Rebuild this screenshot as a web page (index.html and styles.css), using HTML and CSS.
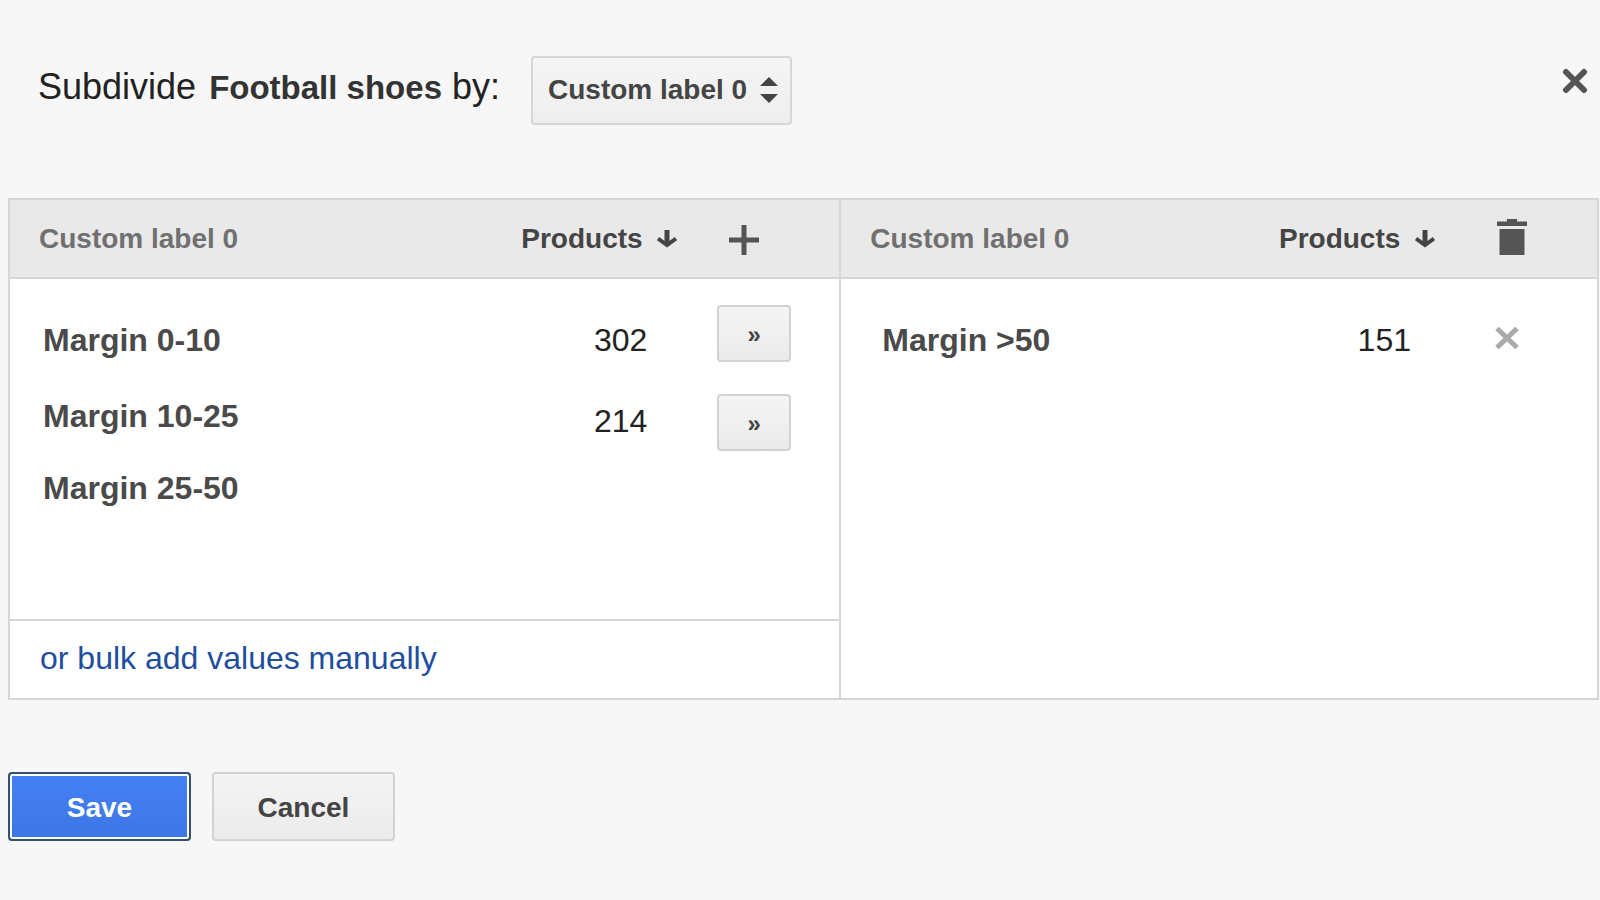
FILE: index.html
```html
<!DOCTYPE html>
<html lang="en">
<head>
    <meta charset="UTF-8">
    <meta name="viewport" content="width=device-width, initial-scale=1.0">
    <title>Subdivide product group</title>
    <link rel="stylesheet" href="styles.css">
</head>
<body>
    <form class="dialog">
        <header class="dialog-header">
            <label class="title" for="attribute">Subdivide <strong>Football shoes</strong> by:</label>
            <div class="select-wrap">
                <select id="attribute">
                    <option>Custom label 0</option>
                </select>
                <svg class="select-arrows" width="18" height="26" viewBox="0 0 18 26" fill="#444">
                    <path d="M9 0 18 9H0z"/>
                    <path d="M0 17h18l-9 9z"/>
                </svg>
            </div>
            <button type="button" class="close-button" aria-label="Close">
                <svg width="26" height="26" viewBox="0 0 26 26" stroke="#555" stroke-width="6" stroke-linecap="round">
                    <path d="M4 4 22 22M22 4 4 22"/>
                </svg>
            </button>
        </header>

        <div class="panels">
            <!-- Values that can be added -->
            <section class="panel available">
                <table>
                    <thead>
                        <tr>
                            <th class="name">Custom label 0</th>
                            <th class="count">
                                <button type="button" class="sort-button">Products
                                    <svg width="20" height="18" viewBox="0 0 20 18" stroke="#444" fill="none">
                                        <path d="M10 0v14" stroke-width="5"/>
                                        <path d="M1 8.500 10 15l9-6.500" stroke-width="4"/>
                                    </svg>
                                </button>
                            </th>
                            <th class="action">
                                <button type="button" class="icon-button" aria-label="Add all">
                                    <svg width="30" height="32" viewBox="0 -2 30 32" fill="#555">
                                        <path d="M12.500 0h5v12.500H30v5H17.500V30h-5V17.500H0v-5h12.500z"/>
                                    </svg>
                                </button>
                            </th>
                        </tr>
                    </thead>
                    <tbody>
                        <tr>
                            <td class="name">Margin 0-10</td>
                            <td class="count">302</td>
                            <td class="action"><button type="button" class="button add-button" aria-label="Add Margin 0-10">»</button></td>
                        </tr>
                        <tr>
                            <td class="name">Margin 10-25</td>
                            <td class="count">214</td>
                            <td class="action"><button type="button" class="button add-button" aria-label="Add Margin 10-25">»</button></td>
                        </tr>
                        <tr>
                            <td class="name">Margin 25-50</td>
                            <td class="count"></td>
                            <td class="action"></td>
                        </tr>
                    </tbody>
                </table>
                <div class="bulk-add">
                    <a href="#">or bulk add values manually</a>
                </div>
            </section>

            <!-- Values already chosen -->
            <section class="panel selected">
                <table>
                    <thead>
                        <tr>
                            <th class="name">Custom label 0</th>
                            <th class="count">
                                <button type="button" class="sort-button">Products
                                    <svg width="20" height="18" viewBox="0 0 20 18" stroke="#444" fill="none">
                                        <path d="M10 0v14" stroke-width="5"/>
                                        <path d="M1 8.500 10 15l9-6.500" stroke-width="4"/>
                                    </svg>
                                </button>
                            </th>
                            <th class="action">
                                <button type="button" class="icon-button" aria-label="Remove all">
                                    <svg width="30" height="40" viewBox="0 0 30 40" fill="#555">
                                        <path d="M0 2.500h10V0h10v2.500h10V7H0z"/>
                                        <path d="M2.500 10h25v26h-25z"/>
                                    </svg>
                                </button>
                            </th>
                        </tr>
                    </thead>
                    <tbody>
                        <tr>
                            <td class="name">Margin &gt;50</td>
                            <td class="count">151</td>
                            <td class="action">
                                <button type="button" class="icon-button" aria-label="Remove Margin &gt;50">
                                    <svg width="24" height="22" viewBox="0 0 24 22" stroke="#aaa" stroke-width="5">
                                        <path d="M2 1.500 22 20.500M22 1.500 2 20.500"/>
                                    </svg>
                                </button>
                            </td>
                        </tr>
                    </tbody>
                </table>
            </section>
        </div>

        <footer class="dialog-footer">
            <button type="button" class="button save-button">Save</button>
            <button type="button" class="button">Cancel</button>
        </footer>
    </form>
</body>
</html>
```
FILE: styles.css
```css
* {
    box-sizing: border-box;
}

body {
    margin: 0;
    background-color: #f7f7f7;
    color: #222;
    font-family: "Liberation Sans", Arial, sans-serif;
}

button,
select {
    font-family: inherit;
    cursor: pointer;
}

svg {
    display: block;
}

.dialog {
    padding: 56px 1px 56px 8px;
}

/* Header */
.dialog-header {
    display: flex;
    align-items: flex-start;
    margin-bottom: 73px;
    padding-left: 30px;
}

.title {
    margin-right: 31px;
    font-size: 36px;
    line-height: 62px;
}

.title strong {
    margin-left: 3px;
    color: #333;
    font-size: 33px;
}

.select-wrap {
    position: relative;
}

.select-wrap select {
    display: block;
    height: 69px;
    padding: 0 42px 2px 15px;
    appearance: none;
    border: 2px solid #d6d6d6;
    border-radius: 4px;
    background: linear-gradient(to bottom, #f5f5f5, #eeeeee);
    color: #444;
    font-size: 28px;
    font-weight: bold;
}

.select-arrows {
    position: absolute;
    top: 21px;
    right: 14px;
    pointer-events: none;
}

.close-button {
    height: 50px;
    margin-left: auto;
    padding: 0 11px;
    border: none;
    background: none;
}

/* Panels */
.panels {
    display: grid;
    grid-template-columns: 11fr 10fr;
    border: 2px solid #d6d6d6;
    background-color: white;
}

.panel {
    display: flex;
    flex-direction: column;
    min-height: 498px;
}

.available {
    border-right: 2px solid #d6d6d6;
}

table {
    width: 100%;
    border-collapse: separate;
    border-spacing: 0;
    table-layout: fixed;
}

th {
    height: 79px;
    padding: 0;
    border-bottom: 2px solid #d6d6d6;
    background-color: #e9e9e9;
    font-size: 28px;
    text-align: left;
}

th.name {
    padding-left: 29px;
    color: #707070;
}

th.count {
    width: 156px;
}

th.action {
    width: 162px;
    padding-left: 52px;
}

.selected th.action {
    padding-left: 62px;
}

.sort-button {
    display: flex;
    align-items: center;
    justify-content: space-between;
    width: 100%;
    padding: 0;
    border: none;
    background: none;
    color: #444;
    font-size: 28px;
    font-weight: bold;
}

.icon-button {
    display: block;
    padding: 0;
    border: none;
    background: none;
}

td {
    padding: 0;
    font-size: 32px;
    line-height: 36px;
    vertical-align: top;
}

td.name {
    padding: 19px 0 0 33px;
    color: #4a4a4a;
    font-weight: bold;
}

td.count {
    padding: 24px 30px 0 0;
    text-align: right;
}

td.action {
    padding: 15px 0 0 40px;
}

tbody tr:first-child {
    height: 100px;
}

tbody tr:first-child td {
    padding-top: 43px;
}

.available tbody tr:first-child .action {
    padding-top: 26px;
}

.selected td.name {
    padding-left: 41px;
}

.selected td.count {
    padding-right: 24px;
}

.selected tbody tr:first-child .action {
    padding: 48px 0 0 60px;
}

.bulk-add {
    height: 79px;
    margin-top: auto;
    padding-left: 30px;
    border-top: 2px solid #d6d6d6;
    line-height: 75px;
}

.bulk-add a {
    color: #1f4e9e;
    font-size: 32px;
    text-decoration: none;
}

.bulk-add a:hover {
    text-decoration: underline;
}

/* Buttons */
.button {
    display: block;
    width: 183px;
    height: 69px;
    padding: 2px 0 0;
    border: 2px solid #d2d2d2;
    border-radius: 4px;
    background: linear-gradient(to bottom, #f4f4f4, #ebebeb);
    color: #444;
    font-size: 28px;
    font-weight: bold;
}

.add-button {
    width: 74px;
    height: 57px;
    font-size: 24px;
}

.save-button {
    border-color: #33506f;
    background: linear-gradient(to bottom, #4480f6, #3d76e4);
    box-shadow: inset 0 0 0 2px #fff;
    color: #fff;
}

.dialog-footer {
    display: flex;
    gap: 21px;
    margin-top: 72px;
}
```
